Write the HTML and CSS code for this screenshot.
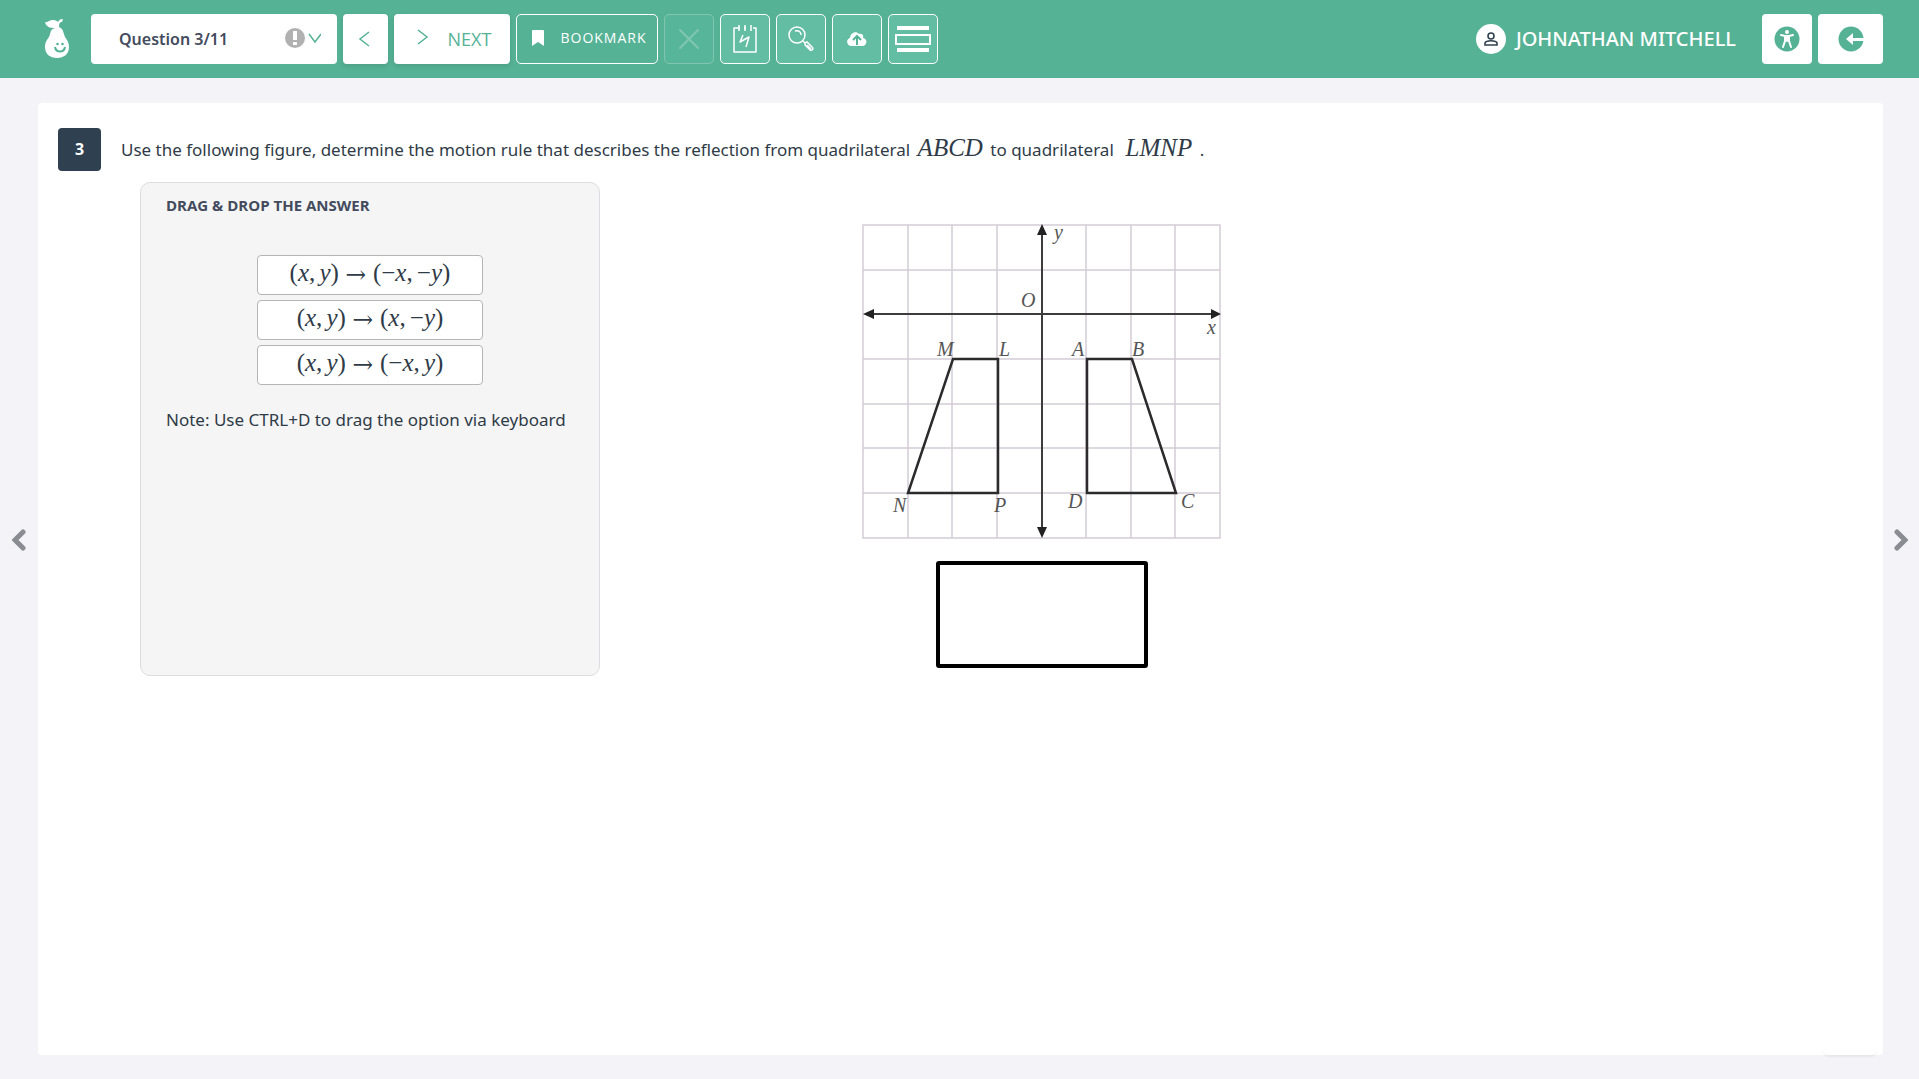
FILE: index.html
```html
<!DOCTYPE html>
<html lang="en">
	<head>
		<meta charset="utf-8" />
		<meta name="viewport" content="width=device-width, initial-scale=1" />
		<title>Question 3/11</title>
		<link rel="stylesheet" href="styles.css">
	</head>
	<body>
		<header class="header">
			<a class="logo" href="#" aria-label="Home">
				<svg width="26" height="40" viewBox="0 0 26 40">
					<path fill="#fff" d="M11 9C6 9 2 8 1 3c3 1 4-2 8-2 3 0 4 1 5 2 1-2 2-3 5-3l-1 3c-2 0-3 1-3 5 4 2 4 4 5 7 1 5 5 6 5 13 0 7-5 11-12 11S1 35 1 28C1 21 5 20 6 15c1-4 2-5 5-6z" />
					<circle cx="13.500" cy="25" r="1.300" fill="#55b295" />
					<circle cx="18.500" cy="25" r="1.300" fill="#55b295" />
					<path d="M11 28c1 6 9 6 10 0" fill="none" stroke="#55b295" stroke-width="2" />
				</svg>
			</a>
			<nav class="toolbar">
				<div class="question-select">
					<select aria-label="Question">
						<option>Question 3/11</option>
					</select>
					<svg class="select-icons" width="36" height="20" viewBox="0 0 36 20">
						<circle cx="10" cy="10" r="10" fill="#b1b1b1" />
						<path fill="#fff" d="M8 3h4v9H8zM8 14h4v3H8z" />
						<path d="M24 6l6 8 6-8" fill="none" stroke="#55b295" stroke-width="1.500" />
					</svg>
				</div>
				<button class="btn prev" aria-label="Previous">
					<svg width="12" height="16" viewBox="0 0 12 16"><path d="M11 1L2 8l9 7" /></svg>
				</button>
				<button class="btn next">
					<svg width="12" height="20" viewBox="0 0 12 20"><path d="M1 1l9 7-9 7" /></svg>
					<span>NEXT</span>
				</button>
				<button class="tool bookmark">
					<svg width="14" height="16" viewBox="0 0 14 16"><path fill="#fff" d="M2 0h10q1 0 1 1v15l-6-4-6 4V1q0-1 1-1z" /></svg>
					<span>BOOKMARK</span>
				</button>
				<button class="tool" disabled aria-label="Cross out">
					<svg width="22" height="22" viewBox="0 0 22 22"><path d="M2 2l18 18M20 2L2 20" stroke="#fff" stroke-width="2" stroke-linecap="round" /></svg>
				</button>
				<button class="tool filled" aria-label="Scratch pad">
					<svg width="26" height="30" viewBox="0 0 26 30" fill="none" stroke="#fff" stroke-width="1.500" stroke-linejoin="round">
						<path d="M6 4H2v24h22V4h-3M6 4h2M12 4h2M7 1v6M13 1v6M19 1v6" />
						<path d="M11 11L8 18l9-5-3 10" />
					</svg>
				</button>
				<button class="tool filled" aria-label="Magnify">
					<svg width="26" height="26" viewBox="0 0 26 26" fill="none" stroke="#fff" stroke-width="1.500">
						<circle cx="9" cy="9" r="8" />
						<path d="M7 5c4-1 6 1 6 4M15 15l2 2M17 17l2-1 5 5c2 2 0 4-2 3l-5-5zM19 19l4 4" />
					</svg>
				</button>
				<button class="tool filled" aria-label="Upload">
					<svg width="20" height="16" viewBox="0 0 20 16">
						<path fill="#fff" d="M4 15c-5-1-5-7-1-8C3 2 9-1 12 3c3-1 5 1 4 4 5 1 4 7 0 8z" />
						<path d="M10 14V6M6 9l4-4 4 4" fill="none" stroke="#55b295" stroke-width="2" />
					</svg>
				</button>
				<button class="tool filled" aria-label="Line reader">
					<svg width="36" height="28" viewBox="0 0 36 28">
						<path d="M2 3h32M2 25h32" stroke="#fff" stroke-width="4" />
						<rect x="1" y="10" width="34" height="9" fill="none" stroke="#fff" stroke-width="2" />
					</svg>
				</button>
			</nav>
			<div class="user">
				<span class="avatar">
					<svg width="14" height="14" viewBox="0 0 14 14" fill="none" stroke="#30404f" stroke-width="1.600">
						<circle cx="7" cy="4" r="3" />
						<path d="M1 13v-2c1-3 11-3 12 0v2z" />
					</svg>
				</span>
				<span class="user-name">JOHNATHAN MITCHELL</span>
			</div>
			<button class="btn square" aria-label="Accessibility">
				<svg width="26" height="26" viewBox="0 0 26 26">
					<circle cx="13" cy="13" r="12.500" fill="#55b295" />
					<circle cx="13" cy="6" r="2" fill="#fff" />
					<path d="M7 9l4 1h4l4-1M13 10v5M11 10v5l-2 6M15 10v5l2 6" fill="none" stroke="#fff" stroke-width="2" stroke-linecap="round" />
				</svg>
			</button>
			<button class="btn exit" aria-label="Exit">
				<svg width="26" height="26" viewBox="0 0 26 26">
					<circle cx="13" cy="13" r="12.500" fill="#55b295" />
					<path fill="#fff" d="M8 13l7-6v5h11v3H15v4z" />
				</svg>
			</button>
		</header>

		<main class="page">
			<button class="side" aria-label="Previous question">
				<svg width="14" height="22" viewBox="0 0 14 22"><path d="M11 3L3 11l8 8" /></svg>
			</button>
			<section class="card">
				<div class="stimulus">
					<span class="number">3</span>
					<p class="text">Use the following figure, determine the motion rule that describes the reflection from quadrilateral <i class="math">ABCD</i> to quadrilateral &nbsp;<i class="math">LMNP</i> .</p>
				</div>
				<div class="work">
					<div class="panel">
						<h2>DRAG &amp; DROP THE ANSWER</h2>
						<div class="options">
							<button class="option" draggable="true">
								<math><mo stretchy="false">(</mo><mi>x</mi><mo>,</mo><mi>y</mi><mo stretchy="false">)</mo><mo class="arrow-to" stretchy="false">→</mo><mo stretchy="false">(</mo><mo form="prefix">−</mo><mi>x</mi><mo>,</mo><mo form="prefix">−</mo><mi>y</mi><mo stretchy="false">)</mo></math>
							</button>
							<button class="option" draggable="true">
								<math><mo stretchy="false">(</mo><mi>x</mi><mo>,</mo><mi>y</mi><mo stretchy="false">)</mo><mo class="arrow-to" stretchy="false">→</mo><mo stretchy="false">(</mo><mi>x</mi><mo>,</mo><mo form="prefix">−</mo><mi>y</mi><mo stretchy="false">)</mo></math>
							</button>
							<button class="option" draggable="true">
								<math><mo stretchy="false">(</mo><mi>x</mi><mo>,</mo><mi>y</mi><mo stretchy="false">)</mo><mo class="arrow-to" stretchy="false">→</mo><mo stretchy="false">(</mo><mo form="prefix">−</mo><mi>x</mi><mo>,</mo><mi>y</mi><mo stretchy="false">)</mo></math>
							</button>
						</div>
						<p class="note">Note: Use CTRL+D to drag the option via keyboard</p>
					</div>
					<div class="figure">
						<svg class="graph" width="360" height="316" viewBox="0 0 360 316">
							<path class="grid" d="M1 1h357v313H1zM46 1v313M90 1v313M135 1v313M224 1v313M269 1v313M313 1v313M1 46h357M1 135h357M1 180h357M1 224h357M1 269h357" />
							<path class="axis" d="M180 5v304M5 90h349" />
							<path class="arrow" d="M180 0l5 11h-10zM180 314l5-11h-10zM1 90l11-5v10zM359 90l-10-5v10z" />
							<path class="shape" d="M91 135h45v134H46zM225 135h45l44 134h-89z" />
							<text x="192" y="15">y</text>
							<text x="159" y="83">O</text>
							<text x="345" y="110">x</text>
							<text x="75" y="132">M</text>
							<text x="137" y="132">L</text>
							<text x="210" y="132">A</text>
							<text x="270" y="132">B</text>
							<text x="31" y="288">N</text>
							<text x="132" y="288">P</text>
							<text x="206" y="284">D</text>
							<text x="319" y="284">C</text>
						</svg>
						<div class="drop" aria-label="Drop area"></div>
					</div>
				</div>
			</section>
			<button class="side" aria-label="Next question">
				<svg width="14" height="22" viewBox="0 0 14 22"><path d="M3 3l8 8-8 8" /></svg>
			</button>
		</main>
	</body>
</html>
```
FILE: styles.css
```css
* {
	box-sizing: border-box;
}
body {
	margin: 0;
	min-height: 100vh;
	display: flex;
	flex-direction: column;
	background-color: #f3f3f8;
	color: #2f3b47;
	font-family: "Open Sans", "Noto Sans", Arial, sans-serif;
	font-size: 18px;
	line-height: 24px;
}
button, select {
	font-family: inherit;
	cursor: pointer;
}
svg {
	display: block;
	flex: none;
}

.header {
	display: flex;
	align-items: center;
	gap: 6px;
	height: 78px;
	padding: 0 36px 0 44px;
	background-color: #55b295;
}
.logo {
	margin-right: 15px;
}
.toolbar {
	display: flex;
	gap: 6px;
}
.question-select {
	position: relative;
	width: 246px;
}
.question-select select {
	width: 100%;
	height: 50px;
	padding: 0 28px;
	border: none;
	border-radius: 4px;
	appearance: none;
	background-color: #fff;
	color: #434b5d;
	font-family: "Noto Sans", "Open Sans", sans-serif;
	font-size: 16px;
	font-weight: 600;
}
.select-icons {
	position: absolute;
	top: 14px;
	right: 16px;
	pointer-events: none;
}
.btn {
	display: flex;
	align-items: center;
	justify-content: center;
	height: 50px;
	padding: 0;
	border: none;
	border-radius: 4px;
	background-color: #fff;
	color: #55b295;
	font-size: 18px;
}
.prev, .next {
	box-shadow: 0 2px 5px rgba(0, 0, 0, 0.12);
}
.prev path, .next path {
	fill: none;
	stroke: #55b295;
	stroke-width: 1.5;
}
.prev {
	width: 45px;
	padding-right: 4px;
}
.next {
	width: 116px;
	gap: 19px;
	padding-left: 4px;
}
.tool {
	display: flex;
	align-items: center;
	justify-content: center;
	width: 50px;
	height: 50px;
	padding: 0;
	border: 1px solid #fff;
	border-radius: 5px;
	background: none;
	color: #fff;
}
.tool.filled {
	background-color: #63bda2;
}
.tool:disabled {
	opacity: 0.25;
	background-color: #5fc5a5;
}
.bookmark {
	width: 142px;
	gap: 15px;
	padding: 0 0 3px 4px;
	font-size: 14px;
	letter-spacing: 1px;
}
.user {
	display: flex;
	align-items: center;
	gap: 10px;
	margin-left: auto;
	margin-right: 20px;
	color: #fff;
	font-family: "Noto Sans", "Open Sans", sans-serif;
	font-size: 20px;
	font-weight: 500;
}
.avatar {
	display: flex;
	align-items: center;
	justify-content: center;
	width: 30px;
	height: 30px;
	border-radius: 50%;
	background-color: #fff;
}
.square {
	width: 50px;
}
.exit {
	width: 65px;
}

.page {
	flex: 1;
	display: grid;
	grid-template-columns: 38px 1fr 36px;
	padding: 25px 0 24px;
}
.side {
	display: flex;
	align-items: center;
	justify-content: center;
	padding: 0 0 78px;
	border: none;
	background: none;
}
.side path {
	fill: none;
	stroke: #8b8c92;
	stroke-width: 5;
	stroke-linecap: round;
}
.card {
	position: relative;
	padding: 25px 20px;
	border-radius: 4px;
	background-color: #fff;
}
.card::after {
	content: "";
	position: absolute;
	right: 6px;
	bottom: 0;
	width: 54px;
	height: 6px;
	border-radius: 0 0 6px 6px;
	box-shadow: 0 2px 2px rgba(0, 0, 0, 0.05);
}
.stimulus {
	display: flex;
	align-items: center;
	gap: 20px;
}
.number {
	width: 43px;
	height: 43px;
	border-radius: 4px;
	background-color: #2f4151;
	color: #fff;
	font-size: 16px;
	font-weight: 700;
	line-height: 43px;
	text-align: center;
}
.text, .note {
	margin: 0;
	font-family: "Noto Sans", "Open Sans", sans-serif;
	font-size: 17px;
}
.math, math {
	font-family: "Liberation Serif", "Times New Roman", serif;
	font-size: 25px;
	line-height: 20px;
}
.math {
	margin: 0 3px;
}
mi {
	font-style: italic;
	text-transform: none;
}
.arrow-to {
	font-family: "DejaVu Math TeX Gyre", "DejaVu Sans", sans-serif;
	font-size: 22px;
}
.work {
	display: flex;
	align-items: flex-start;
	gap: 262px;
	padding: 11px 0 0 82px;
}
.panel {
	flex: none;
	width: 460px;
	min-height: 494px;
	padding: 12px 25px;
	border: 1px solid #dddddf;
	border-radius: 10px;
	background-color: #f5f5f5;
}
.panel h2 {
	margin: 0;
	color: #434b5d;
	font-size: 15px;
	font-weight: 700;
	line-height: 20px;
}
.options {
	display: flex;
	flex-direction: column;
	gap: 5px;
	width: 226px;
	margin: 40px auto 23px;
}
.option {
	display: flex;
	align-items: center;
	justify-content: center;
	height: 40px;
	padding: 0;
	border: 1px solid #b5b5b5;
	border-radius: 4px;
	background-color: #fff;
	color: #2f3b47;
}
.figure {
	display: flex;
	flex-direction: column;
	align-items: center;
	gap: 21px;
	padding-top: 42px;
}
.graph {
	overflow: visible;
}
.grid {
	fill: none;
	stroke: #d3ccd6;
	stroke-width: 1.5;
}
.axis {
	fill: none;
	stroke: #3c3c3c;
	stroke-width: 2;
}
.arrow {
	fill: #222;
}
.shape {
	fill: none;
	stroke: #2b2b2b;
	stroke-width: 2.5;
}
.graph text {
	fill: #555;
	font-family: "Liberation Serif", "Times New Roman", serif;
	font-size: 20px;
	font-style: italic;
}
.drop {
	width: 212px;
	height: 107px;
	border: 4px solid #000;
	border-radius: 3px;
}
```
